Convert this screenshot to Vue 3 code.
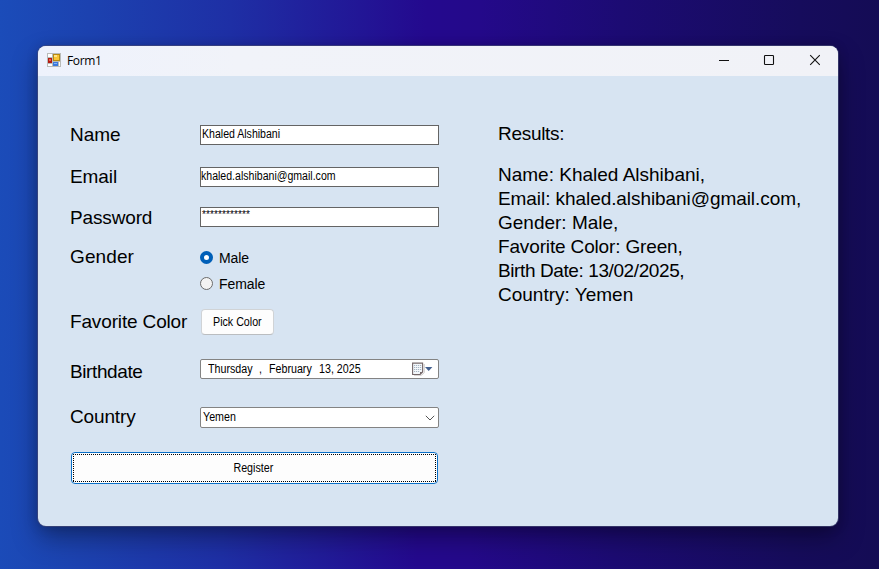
<script setup>
const results = [
  { text: 'Name: Khaled Alshibani,', fit: '' },
  { text: 'Email: khaled.alshibani@gmail.com,', fit: 'tight-1' },
  { text: 'Gender: Male,', fit: '' },
  { text: 'Favorite Color: Green,', fit: 'tight-2' },
  { text: 'Birth Date: 13/02/2025,', fit: 'tight-4' },
  { text: 'Country: Yemen', fit: '' },
]
</script>

<template>
  <div class="desktop">
    <div class="window">
      <header class="titlebar">
        <svg class="app-icon" width="14" height="14" viewBox="0 0 14 14">
          <rect x="0" y="0" width="14" height="14" fill="#b9bbb9" />
          <rect x="1" y="1" width="4" height="3" fill="#fff" />
          <rect x="1" y="11" width="4" height="2" fill="#fff" />
          <rect x="12" y="9" width="1" height="4" fill="#fff" />
          <rect x="6" y="1" width="7" height="7" fill="#b78a13" />
          <rect x="7" y="2" width="5" height="5" fill="#f9c535" />
          <rect x="7" y="2" width="3" height="2" fill="#ffe48a" />
          <rect x="1" y="5" width="4" height="5" fill="#b3190f" />
          <rect x="2" y="6" width="2" height="2" fill="#e8604c" />
          <rect x="6" y="9" width="5" height="4" fill="#3b78dc" />
          <rect x="7" y="10" width="3" height="1" fill="#86b4f6" />
        </svg>
        <span class="title">Form1</span>
        <div class="controls">
          <svg width="12" height="12" viewBox="0 0 12 12"><path d="M1 6.5H11" stroke="#111" fill="none" /></svg>
          <svg width="12" height="12" viewBox="0 0 12 12"><rect x="1.5" y="1.5" width="9" height="9" rx="0.8" stroke="#111" stroke-width="1.1" fill="none" /></svg>
          <svg width="12" height="12" viewBox="0 0 12 12"><path d="M1.2 1.2L10.8 10.8M10.8 1.2L1.2 10.8" stroke="#111" stroke-width="1.1" fill="none" /></svg>
        </div>
      </header>

      <main class="body">
        <form class="form" @submit.prevent>
          <span class="label">Name</span>
          <div class="field"><span class="small name">Khaled Alshibani</span></div>

          <span class="label tight-1">Email</span>
          <div class="field email-field"><span class="small email">khaled.alshibani@gmail.com</span></div>

          <span class="label password-label tight-2">Password</span>
          <div class="field"><span class="mask">************</span></div>

          <span class="label gender-label">Gender</span>
          <div class="radios">
            <div class="radio"><i class="dot on"></i>Male</div>
            <div class="radio"><i class="dot"></i>Female</div>
          </div>

          <span class="label tight-2">Favorite Color</span>
          <button class="pick" type="button"><span class="small">Pick Color</span></button>

          <span class="label birth-label tight-4">Birthdate</span>
          <div class="field date">
            <span class="small weekday">Thursday</span>
            <span class="small comma">,</span>
            <span class="small month">February</span>
            <span class="small day">13, 2025</span>
            <svg class="calendar" width="22" height="14" viewBox="0 0 22 14">
              <path d="M2 13.2H9.5L12.2 10.5V2" stroke="#c9c5c4" fill="none" />
              <path d="M.6 1.1H10.6V10L8 12.5H.6Z" fill="#f4f8fb" stroke="#75686a" stroke-width="1.1" />
              <path d="M10.6 10H8V12.5Z" fill="#75686a" />
              <path d="M2 3.5H9.2M2 5.5H9.2M2 7.5H9.2M2 9.5H7.5" stroke="#a6b5c5" stroke-dasharray="1.2 .8" />
              <path d="M13 5H20.4L16.7 9Z" fill="#43608f" />
            </svg>
          </div>

          <span class="label country-label tight-2">Country</span>
          <div class="field country">
            <span class="small">Yemen</span>
            <svg width="10" height="6" viewBox="0 0 10 6"><path d="M.8 .8L5 5L9.2 .8" stroke="#555" fill="none" /></svg>
          </div>

          <button class="register" type="submit"><span class="small">Register</span></button>
        </form>

        <section class="results">
          <div class="results-title tight-3">Results:</div>
          <div v-for="line in results" :key="line.text" :class="line.fit">{{ line.text }}</div>
        </section>
      </main>
    </div>
  </div>
</template>

<style>
body {
  margin: 0;
  overflow: hidden;
}
</style>

<style scoped>
.desktop {
  box-sizing: border-box;
  width: 879px;
  height: 569px;
  padding: 46px 0 0 38px;
  background: linear-gradient(91deg, #1b4cb9 0%, #1c42b0 10%, #1e2fa5 26%, #24098e 48%, #24098a 54%, #1c0b73 70%, #160c5c 90%, #140c54 100%);
  font-family: "Liberation Sans", Arial, sans-serif;
  color: #000;
}
.window {
  width: 800px;
  height: 480px;
  border-radius: 8px;
  overflow: hidden;
  background: #d7e4f2;
  box-shadow: 0 0 0 1px rgba(70, 75, 120, 0.65), 0 12px 26px rgba(0, 0, 0, 0.34), 0 1px 12px rgba(0, 0, 0, 0.18);
}
.titlebar {
  display: flex;
  align-items: center;
  height: 30px;
  box-sizing: border-box;
  padding: 0 17px 0 9px;
  background: linear-gradient(90deg, #eef2fc, #f1f3f9 25%, #f1f2f7);
}
.app-icon {
  margin-bottom: 2px;
}
.title {
  margin-left: 6px;
  font: 12px/16px "Open Sans", "Noto Sans", sans-serif;
  letter-spacing: -0.35px;
}
.controls {
  display: flex;
  gap: 34px;
  margin-left: auto;
  padding-bottom: 2px;
}
.controls svg {
  display: block;
}
.controls svg:first-child {
  margin-right: -1px;
}
.body {
  display: flex;
  gap: 59px;
  padding: 38px 0 0 32px;
}
.form {
  display: grid;
  width: 369px;
  grid-template-columns: 130px 239px;
  grid-template-rows: 42px 42px 38px 60px 52px 42px 55px 38px;
  align-items: center;
}
.label {
  font-size: 19px;
  line-height: 24px;
  white-space: nowrap;
}
.tight-1 {
  letter-spacing: -0.07px;
}
.tight-2 {
  letter-spacing: -0.15px;
}
.tight-3 {
  letter-spacing: -0.3px;
}
.tight-4 {
  letter-spacing: -0.4px;
}
.password-label {
  padding-top: 2px;
}
.gender-label {
  align-self: start;
  margin-top: 9px;
  letter-spacing: 0.1px;
}
.birth-label {
  padding-top: 5px;
}
.country-label {
  padding-bottom: 2px;
}
.field {
  display: flex;
  box-sizing: border-box;
  height: 20px;
  border: 1px solid #646464;
  background: #fff;
  padding-left: 1px;
}
.email-field {
  padding-left: 0;
}
.small {
  display: inline-block;
  font-size: 12px;
  line-height: 16px;
  white-space: nowrap;
  transform: scaleX(0.89);
  transform-origin: left center;
}
.name {
  transform: scaleX(0.88);
}
.email {
  transform: scaleX(0.88);
}
.mask {
  font-size: 10px;
  line-height: 13px;
  letter-spacing: 0.1px;
}
.radios {
  align-self: start;
  padding-top: 9px;
}
.radio {
  display: flex;
  align-items: center;
  height: 26px;
  font-size: 14px;
  letter-spacing: -0.08px;
}
.dot {
  box-sizing: border-box;
  width: 13px;
  height: 13px;
  margin: 0 6px 1px 0;
  border: 1px solid #6b6b6b;
  border-radius: 50%;
  background: #f3f3f3;
}
.dot.on {
  border: 4px solid #005fb8;
  background: #fff;
}
.pick,
.register {
  display: flex;
  align-items: center;
  justify-content: center;
  box-sizing: border-box;
  padding: 0;
  background: #fdfdfd;
  font-family: inherit;
  color: #000;
}
.pick .small,
.register .small {
  transform-origin: center;
}
.pick .small {
  margin-right: 1px;
}
.register .small {
  margin-right: 2px;
}
.pick {
  width: 73px;
  height: 26px;
  margin-left: 1px;
  border: 1px solid #d0d3d6;
  border-bottom-color: #babdc0;
  border-radius: 4px;
}
.date,
.country {
  align-items: center;
  border-color: #838383;
  border-radius: 2px;
}
.date {
  padding: 0 4px 0 7px;
}
.weekday {
  width: 51px;
}
.comma {
  width: 10px;
}
.month {
  width: 50px;
}
.calendar {
  margin-left: auto;
}
.country {
  height: 21px;
  justify-content: space-between;
  padding: 0 3px 0 2px;
}
.country .small {
  margin-bottom: 1px;
}
.register {
  position: relative;
  grid-column: 1 / 3;
  align-self: end;
  width: 367px;
  height: 32px;
  margin-left: 1px;
  margin-bottom: -1px;
  border: 1px solid #0a70c8;
  border-radius: 4px;
}
/* Focus rectangle: alternating single black pixels on each side. */
.register::after {
  content: "";
  position: absolute;
  inset: 1px;
  background:
    repeating-linear-gradient(90deg, #000 0 1px, transparent 1px 2px) top / 100% 1px no-repeat,
    repeating-linear-gradient(90deg, #000 0 1px, transparent 1px 2px) bottom / 100% 1px no-repeat,
    repeating-linear-gradient(180deg, #000 0 1px, transparent 1px 2px) left / 1px 100% no-repeat,
    repeating-linear-gradient(180deg, #000 0 1px, transparent 1px 2px) right / 1px 100% no-repeat;
}
.results {
  padding-top: 8px;
  font-size: 19px;
  line-height: 24px;
  white-space: nowrap;
}
.results-title {
  margin-bottom: 17px;
}
</style>
